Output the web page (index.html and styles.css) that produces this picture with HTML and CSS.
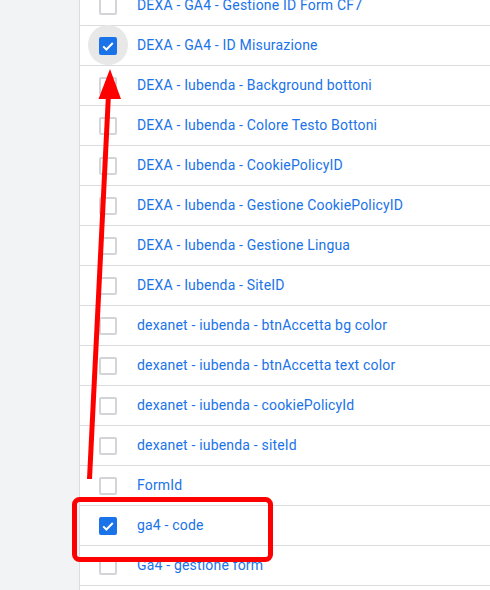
FILE: index.html
```html
<!DOCTYPE html>
<html>
<head>
<meta charset="utf-8">
<link rel="stylesheet" href="styles.css">
</head>
<body>
<div class="page">
  <aside class="side"></aside>
  <main class="list">
    <div class="row"><span class="cb"></span><span class="label">DEXA - GA4 - Gestione ID Form CF7</span></div>
    <div class="row"><span class="cb checked focus"><svg viewBox="0 0 18 18" width="18" height="18"><path d="M4.2 9.4l3.2 3.1L13.8 6" fill="none" stroke="#fff" stroke-width="2"/></svg></span><span class="label">DEXA - GA4 - ID Misurazione</span></div>
    <div class="row"><span class="cb"></span><span class="label">DEXA - Iubenda - Background bottoni</span></div>
    <div class="row"><span class="cb"></span><span class="label">DEXA - Iubenda - Colore Testo Bottoni</span></div>
    <div class="row"><span class="cb"></span><span class="label">DEXA - Iubenda - CookiePolicyID</span></div>
    <div class="row"><span class="cb"></span><span class="label">DEXA - Iubenda - Gestione CookiePolicyID</span></div>
    <div class="row"><span class="cb"></span><span class="label">DEXA - Iubenda - Gestione Lingua</span></div>
    <div class="row"><span class="cb"></span><span class="label">DEXA - Iubenda - SiteID</span></div>
    <div class="row"><span class="cb"></span><span class="label">dexanet - iubenda - btnAccetta bg color</span></div>
    <div class="row"><span class="cb"></span><span class="label">dexanet - iubenda - btnAccetta text color</span></div>
    <div class="row"><span class="cb"></span><span class="label">dexanet - iubenda - cookiePolicyId</span></div>
    <div class="row"><span class="cb"></span><span class="label">dexanet - iubenda - siteId</span></div>
    <div class="row"><span class="cb"></span><span class="label">FormId</span></div>
    <div class="row"><span class="cb checked"><svg viewBox="0 0 18 18" width="18" height="18"><path d="M4.2 9.4l3.2 3.1L13.8 6" fill="none" stroke="#fff" stroke-width="2"/></svg></span><span class="label">ga4 - code</span></div>
    <div class="row"><span class="cb"></span><span class="label">Ga4 - gestione form</span></div>
    <div class="row"></div>
  </main>
</div>
<svg class="annot" width="490" height="590" viewBox="0 0 490 590">
  <line x1="89.5" y1="479" x2="108.5" y2="94" stroke="#ff0000" stroke-width="5"/>
  <polygon points="110,69 98.5,99 121,99" fill="#ff0000"/>
  <rect x="74.5" y="499.5" width="196" height="60" rx="5" ry="5" fill="none" stroke="#ff0000" stroke-width="5"/>
</svg>
</body>
</html>
```
FILE: styles.css
```css
html, body {
  margin: 0;
  padding: 0;
  background: #fff;
  overflow: hidden;
}
body {
  width: 490px;
  height: 590px;
  position: relative;
  font-family: Roboto, "Liberation Sans", Arial, sans-serif;
}
.page {
  display: flex;
  height: 590px;
  overflow: hidden;
}
.side {
  width: 79px;
  flex: none;
  background: #f1f3f4;
  border-right: 1px solid #dadce0;
}
.list {
  flex: 1;
  margin-top: -14px;
}
.row {
  height: 39px;
  border-bottom: 1px solid #dadce0;
  display: flex;
  align-items: center;
  padding-left: 19px;
}
.cb {
  width: 14px;
  height: 14px;
  border: 2px solid #d2d4d7;
  border-radius: 2px;
  flex: none;
  position: relative;
  margin-top: 1px;
}
.cb.checked {
  width: 18px;
  height: 18px;
  border: none;
  background: #1a73e8;
}
.cb svg {
  display: block;
  position: relative;
  z-index: 1;
}
.cb.focus {
  z-index: 0;
}
.cb.focus::before {
  content: "";
  position: absolute;
  left: -11px;
  top: -12px;
  width: 40px;
  height: 40px;
  border-radius: 50%;
  background: #e8e8e8;
  z-index: 0;
}
.cb.focus::after {
  content: "";
  position: absolute;
  inset: 0;
  background: #1a73e8;
  border-radius: 2px;
  z-index: 0;
}
.label {
  margin-left: 20px;
  padding-bottom: 2px;
  font-size: 14px;
  color: #1a73e8;
  letter-spacing: 0.18px;
}
.annot {
  position: absolute;
  left: 0;
  top: 0;
  pointer-events: none;
}
```
